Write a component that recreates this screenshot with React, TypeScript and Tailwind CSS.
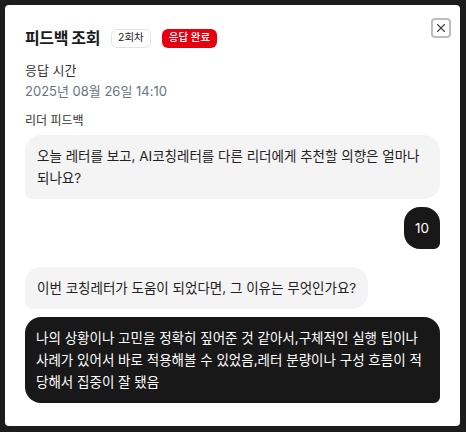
import { X } from 'lucide-react'

type Item = { q: string; a: string }

const ITEMS: Item[] = [
  { q: '오늘 레터를 보고, AI코칭레터를 다른 리더에게 추천할 의향은 얼마나 되나요?', a: '10' },
  {
    q: '이번 코칭레터가 도움이 되었다면, 그 이유는 무엇인가요?',
    a: '나의 상황이나 고민을 정확히 짚어준 것 같아서,구체적인 실행 팁이나 사례가 있어서 바로 적용해볼 수 있었음,레터 분량이나 구성 흐름이 적당해서 집중이 잘 됐음',
  },
]

export default function App() {
  return (
    <div
      className="w-[466px] h-[432px] bg-[#1c1c1c] p-[5px] pr-[6px] pb-[6px]"
      style={{ fontFamily: 'Inter, "Noto Sans CJK KR", sans-serif' }}
    >
      <div className="relative h-full bg-white rounded-[4px] px-5 pt-[23px] text-[#1a1a1a]">
        <button className="absolute top-[13px] right-[9px] w-5 h-5 flex items-center justify-center rounded-[4px] border-2 border-[#bdbdbd] text-[#444]">
          <X size={14} strokeWidth={2} />
        </button>

        {/* 헤더 */}
        <div className="flex items-center gap-[11px]">
          <h1 className="text-[16px] font-bold leading-5 tracking-tight">피드백 조회</h1>
          <span className="h-[19px] px-[6px] flex items-center rounded-md border border-[#e3e3e3] text-[10.5px] text-[#222]">
            2회차
          </span>
          <span className="h-[19px] px-[7px] flex items-center rounded-md bg-[#e5000f] text-[10.5px] font-medium text-white">
            응답 완료
          </span>
        </div>

        <p className="mt-3 text-[13px] leading-5 text-[#333]">응답 시간</p>
        <p className="mt-px text-[13px] leading-5 text-[#6b7280]">2025년 08월 26일 14:10</p>

        <p className="mt-[10px] mb-1 text-[12px] leading-5 text-[#333]">리더 피드백</p>

        <div className="flex flex-col gap-[18px]">
          {ITEMS.map((it, i) => (
            <div key={i} className="flex flex-col gap-2">
              <div className="self-start bg-[#f4f4f4] rounded-2xl rounded-bl-lg px-3 py-[10px] text-[13.5px] leading-[22px] text-[#222]">
                {it.q}
              </div>
              <div className="self-end bg-[#181818] rounded-2xl rounded-br-md px-[11px] py-[10px] text-[13.5px] leading-[22px] text-white">
                {it.a}
              </div>
            </div>
          ))}
        </div>
      </div>
    </div>
  )
}
